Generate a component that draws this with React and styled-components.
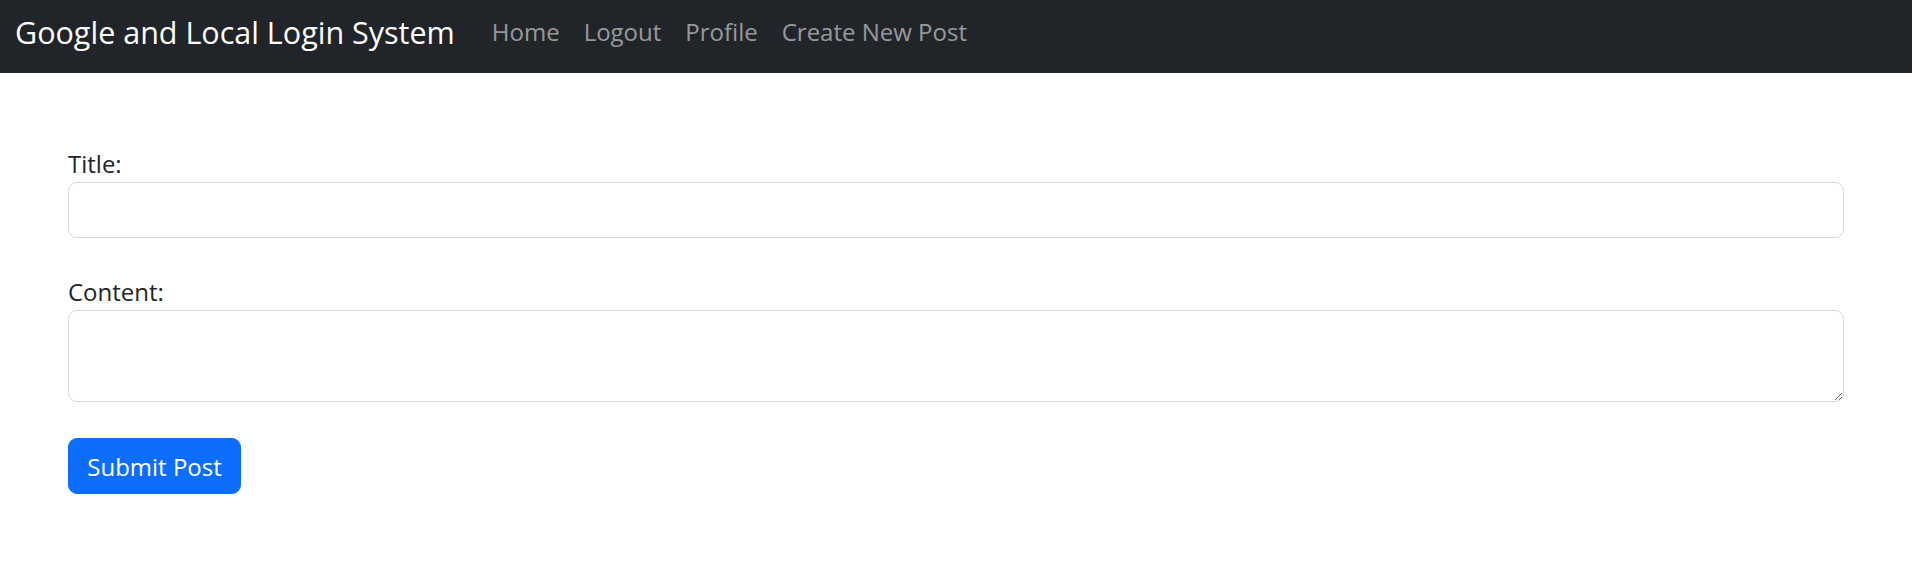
import React from "react";
import styled, { createGlobalStyle } from "styled-components";

const GlobalStyle = createGlobalStyle`
  * { box-sizing: border-box; }
  html, body { margin: 0; padding: 0; background: #fff; }
  body {
    font-family: "Open Sans", "Noto Sans", sans-serif;
    color: #212529;
  }
`;

const Navbar = styled.nav`
  height: 73px;
  background: #212529;
  display: flex;
  align-items: center;
  padding: 0 0 10px 15px;
`;

const Brand = styled.a`
  color: #fff;
  font-size: 30.5px;
  text-decoration: none;
  margin-right: 25px;
  white-space: nowrap;
`;

const NavList = styled.div`
  display: flex;
  align-items: center;
`;

const NavLink = styled.a`
  color: rgba(255, 255, 255, 0.55);
  font-size: 24px;
  text-decoration: none;
  padding: 0 12px;
  white-space: nowrap;
`;

const Container = styled.main`
  padding: 73px 68px 0;
`;

const Form = styled.form`
  display: flex;
  flex-direction: column;
`;

const Field = styled.div`
  display: flex;
  flex-direction: column;
  margin-bottom: 36px;
`;

const Label = styled.label`
  font-size: 24px;
  line-height: 36px;
  color: #212529;
`;

const Input = styled.input`
  height: 56px;
  border: 1.5px solid #d3d7dc;
  border-radius: 9px;
  padding: 9px 18px;
  font-size: 24px;
  font-family: inherit;
  outline: none;
`;

const TextArea = styled.textarea`
  height: 92px;
  border: 1.5px solid #d3d7dc;
  border-radius: 9px;
  padding: 9px 18px;
  font-size: 24px;
  font-family: inherit;
  outline: none;
  resize: vertical;
`;

const SubmitButton = styled.button`
  align-self: flex-start;
  width: 173px;
  height: 56px;
  background: #0d6efd;
  border: 1.5px solid #0d6efd;
  border-radius: 9px;
  color: #fff;
  font-family: inherit;
  font-size: 24px;
  padding: 0;
  cursor: pointer;
`;

export default function App() {
  return (
    <>
      <GlobalStyle />
      <Navbar>
        <Brand href="#">Google and Local Login System</Brand>
        <NavList>
          <NavLink href="#">Home</NavLink>
          <NavLink href="#">Logout</NavLink>
          <NavLink href="#">Profile</NavLink>
          <NavLink href="#">Create New Post</NavLink>
        </NavList>
      </Navbar>
      <Container>
        <Form onSubmit={(e) => e.preventDefault()}>
          <Field>
            <Label htmlFor="title">Title:</Label>
            <Input id="title" type="text" />
          </Field>
          <Field>
            <Label htmlFor="content">Content:</Label>
            <TextArea id="content" />
          </Field>
          <SubmitButton type="submit">Submit Post</SubmitButton>
        </Form>
      </Container>
    </>
  );
}
